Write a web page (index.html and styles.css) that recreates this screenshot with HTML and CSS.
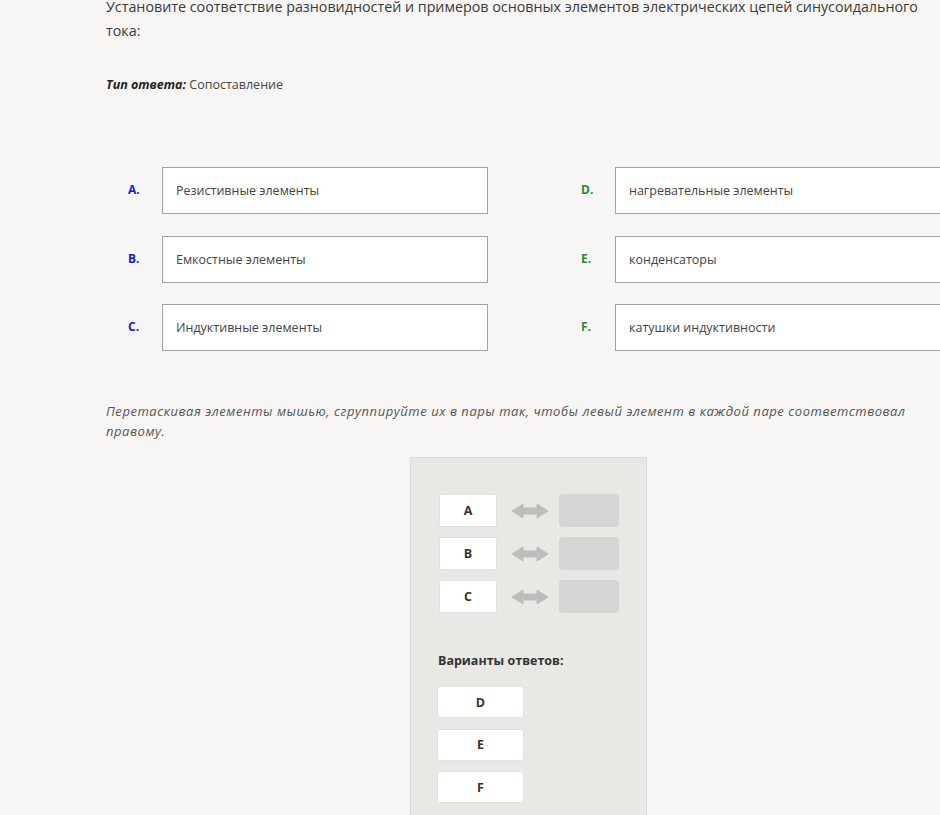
FILE: index.html
```html
<!DOCTYPE html>
<html lang="ru">
<head>
<meta charset="utf-8">
<link rel="stylesheet" href="styles.css">
</head>
<body>
<div class="page">
  <p class="title">Установите соответствие разновидностей и примеров основных элементов электрических цепей синусоидального тока:</p>
  <p class="type"><span class="type-label">Тип ответа:</span> Сопоставление</p>

  <div class="pairs">
    <div class="col">
      <div class="row"><span class="lbl blue">A.</span><div class="box">Резистивные элементы</div></div>
      <div class="row"><span class="lbl blue">B.</span><div class="box">Емкостные элементы</div></div>
      <div class="row"><span class="lbl blue">C.</span><div class="box">Индуктивные элементы</div></div>
    </div>
    <div class="col">
      <div class="row"><span class="lbl green">D.</span><div class="box">нагревательные элементы</div></div>
      <div class="row"><span class="lbl green">E.</span><div class="box">конденсаторы</div></div>
      <div class="row"><span class="lbl green">F.</span><div class="box">катушки индуктивности</div></div>
    </div>
  </div>

  <p class="hint">Перетаскивая элементы мышью, сгруппируйте их в пары так, чтобы левый элемент в каждой паре соответствовал правому.</p>

  <div class="panel">
    <div class="match">
      <div class="mrow"><div class="chip">A</div><svg class="arrow" viewBox="0 0 36 16" width="36" height="16"><path d="M0 8 L11 1 L11 5 L25 5 L25 1 L36 8 L25 15 L25 11 L11 11 L11 15 Z" fill="#bdbdbb" stroke="#bdbdbb" stroke-width="1" stroke-linejoin="round"/></svg><div class="drop"></div></div>
      <div class="mrow"><div class="chip">B</div><svg class="arrow" viewBox="0 0 36 16" width="36" height="16"><path d="M0 8 L11 1 L11 5 L25 5 L25 1 L36 8 L25 15 L25 11 L11 11 L11 15 Z" fill="#bdbdbb" stroke="#bdbdbb" stroke-width="1" stroke-linejoin="round"/></svg><div class="drop"></div></div>
      <div class="mrow"><div class="chip">C</div><svg class="arrow" viewBox="0 0 36 16" width="36" height="16"><path d="M0 8 L11 1 L11 5 L25 5 L25 1 L36 8 L25 15 L25 11 L11 11 L11 15 Z" fill="#bdbdbb" stroke="#bdbdbb" stroke-width="1" stroke-linejoin="round"/></svg><div class="drop"></div></div>
    </div>
    <div class="variants-title">Варианты ответов:</div>
    <div class="variants">
      <div class="vchip">D</div>
      <div class="vchip">E</div>
      <div class="vchip">F</div>
    </div>
  </div>
</div>
</body>
</html>
```

FILE: styles.css
```css
html, body {
  margin: 0;
  padding: 0;
  background: #f7f6f4;
  overflow: hidden;
}
body {
  font-family: "Open Sans", "Noto Sans", sans-serif;
  color: #333;
}
.page {
  padding-left: 106px;
  width: 834px;
}
.title {
  margin: -5px 0 0 0;
  font-size: 14.3px;
  line-height: 24px;
  color: #3a3a3a;
  width: 830px;
}
.type {
  margin: 32px 0 0 0;
  font-size: 12.5px;
  line-height: 20px;
  color: #444;
}
.type-label {
  font-weight: 700;
  font-style: italic;
  color: #222;
}
.pairs {
  display: flex;
  margin-top: 72px;
  margin-left: 22px;
  gap: 93px;
}
.col {
  display: flex;
  flex-direction: column;
  gap: 21.5px;
}
.row {
  display: flex;
  align-items: center;
}
.lbl {
  width: 34px;
  font-size: 12px;
  font-weight: 700;
  margin-top: -2px;
}
.blue { color: #1a1ac8; }
.green { color: #2b8a2b; }
.box {
  box-sizing: border-box;
  width: 326px;
  height: 47px;
  border: 1px solid #a3a3a3;
  background: #fff;
  padding-left: 13px;
  display: flex;
  align-items: center;
  font-size: 12.5px;
  color: #444;
}
.hint {
  margin: 50px 0 0 0;
  font-size: 13px;
  letter-spacing: 0.55px;
  line-height: 20px;
  font-style: italic;
  color: #555;
  width: 820px;
}
.panel {
  box-sizing: border-box;
  margin: 16px 0 0 304px;
  width: 237px;
  height: 380px;
  background: #e9e8e4;
  border: 1px solid #dcdbd7;
  padding: 36px 0 0 26px;
}
.match {
  display: flex;
  flex-direction: column;
  gap: 10px;
}
.mrow {
  display: flex;
  align-items: center;
}
.chip {
  box-sizing: border-box;
  width: 58px;
  height: 33px;
  margin-left: 2px;
  background: #fff;
  border: 1px solid #e2e1dd;
  border-radius: 2px;
  display: flex;
  align-items: center;
  justify-content: center;
  font-size: 12.5px;
  font-weight: 700;
  color: #333;
}
.arrow {
  margin-left: 15px;
  margin-right: 11px;
  display: block;
}
.drop {
  width: 60px;
  height: 33px;
  border-radius: 4px;
  background: #d6d5d3;
}
.variants-title {
  margin-top: 38px;
  margin-left: 1px;
  font-size: 12.5px;
  font-weight: 700;
  color: #333;
  line-height: 20px;
}
.variants {
  margin-top: 15px;
  display: flex;
  flex-direction: column;
  gap: 10.5px;
}
.vchip {
  box-sizing: border-box;
  width: 87px;
  height: 32px;
  background: #fff;
  border: 1px solid #e2e1dd;
  border-radius: 3px;
  display: flex;
  align-items: center;
  justify-content: center;
  font-size: 12.5px;
  font-weight: 700;
  color: #333;
}
```
